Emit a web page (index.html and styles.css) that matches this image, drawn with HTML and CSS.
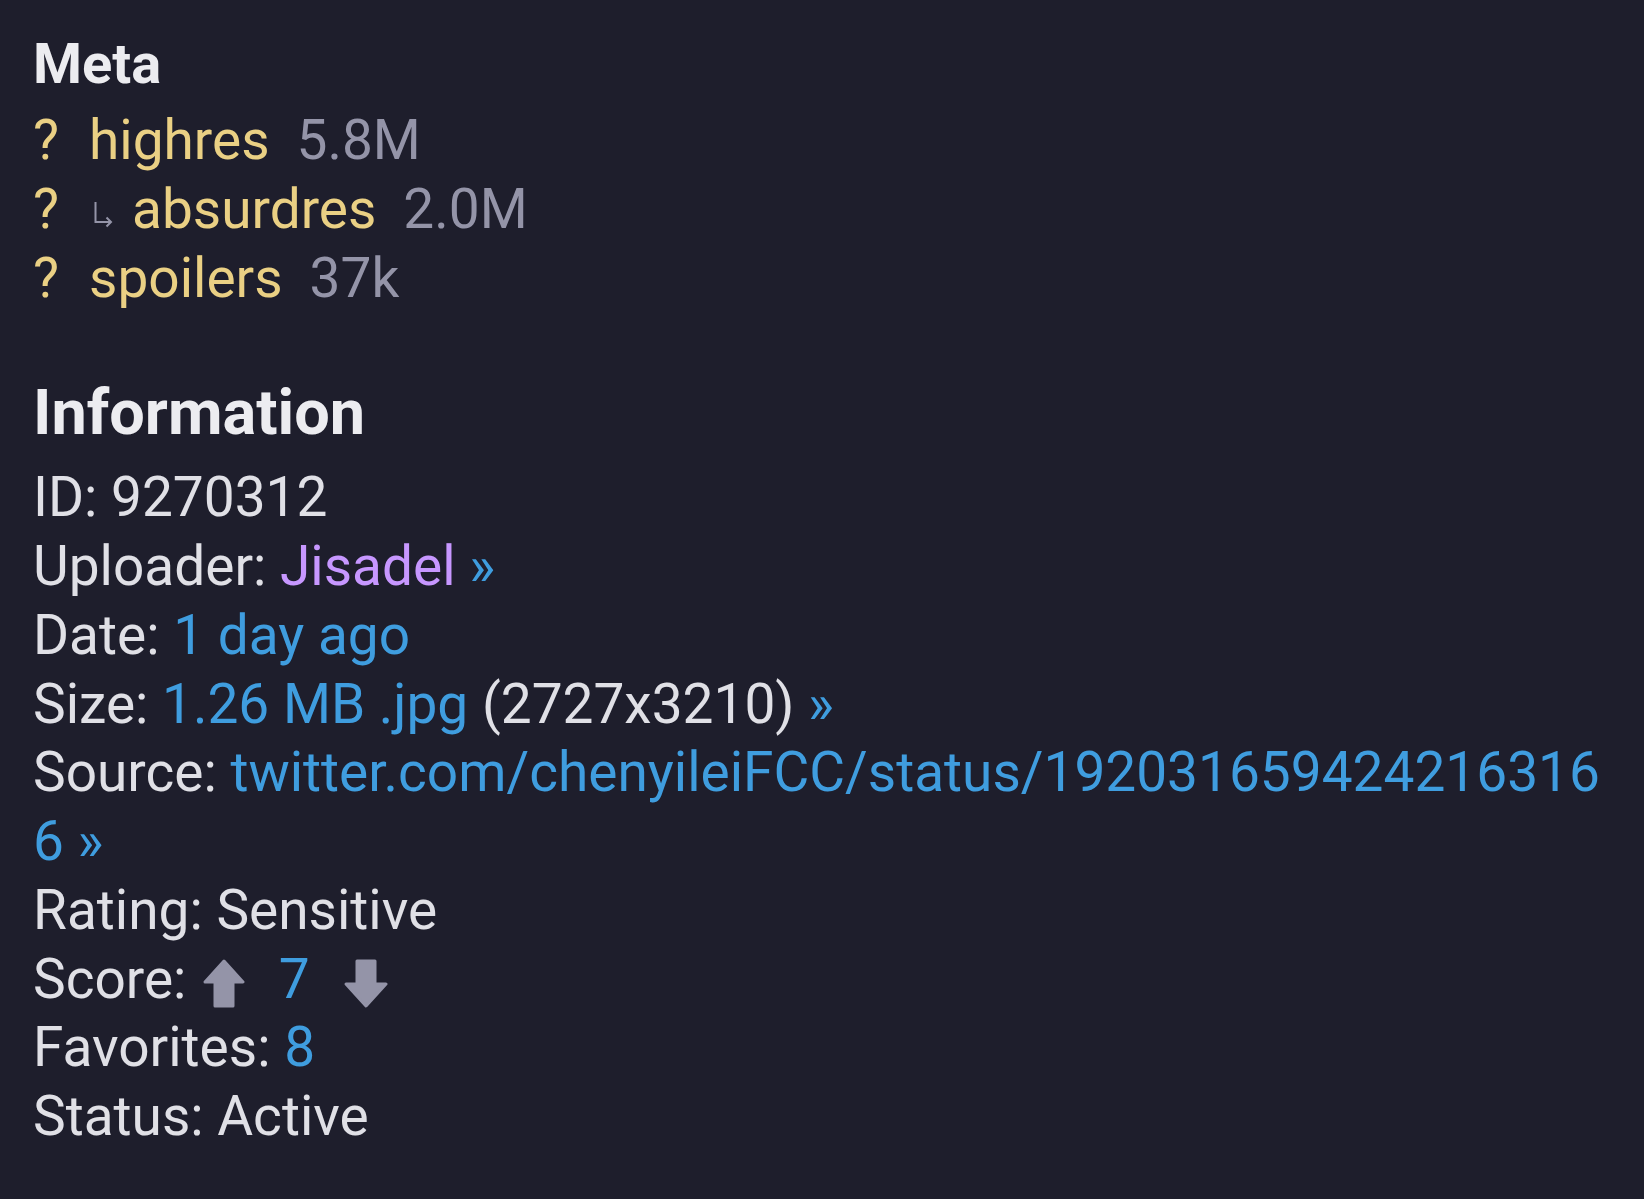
FILE: index.html
```html
<!DOCTYPE html>
<html>

<head>
	<title>Post 9270312</title>
	<meta charset="utf-8">
	<link rel="stylesheet" href="styles.css">
</head>

<body>
	<section class="tag-list">
		<h3>Meta</h3>
		<ul>
			<li><a class="wiki-link" href="#">?</a><a class="search-tag" href="#">highres</a><span class="post-count">5.8M</span></li>
			<li><a class="wiki-link" href="#">?</a><svg class="child-arrow" width="20" height="27" viewBox="0 0 20 27"><path d="M2.5 1 V21 H18 M13.5 16.5 L18 21 L13.5 25.5" fill="none" stroke="#9494a8" stroke-width="2"/></svg><a class="search-tag" href="#">absurdres</a><span class="post-count">2.0M</span></li>
			<li><a class="wiki-link" href="#">?</a><a class="search-tag" href="#">spoilers</a><span class="post-count">37k</span></li>
		</ul>
	</section>
	<section class="post-information">
		<h2>Information</h2>
		<ul>
			<li>ID: 9270312</li>
			<li>Uploader: <a class="user-builder" href="#">Jisadel</a> <a href="#">»</a></li>
			<li>Date: <a href="#">1 day ago</a></li>
			<li>Size: <a href="#">1.26 MB .jpg</a> (2727x3210) <a href="#">»</a></li>
			<li class="source">Source: <a class="source-link" href="#">twitter.com/chenyileiFCC/status/1920316594242163166</a> <a href="#">»</a></li>
			<li>Rating: Sensitive</li>
			<li class="score">Score:
				<a class="vote" href="#"><svg width="42" height="49" viewBox="0 0 42 49"><path d="M21 2 L40 23 H30 V47 H12 V23 H2 Z" fill="#9494a8" stroke="#9494a8" stroke-width="3" stroke-linejoin="round"/></svg></a>
				<a class="score-count" href="#">7</a>
				<a class="vote" href="#"><svg width="44" height="49" viewBox="0 0 44 49"><path d="M22 47 L42 25 H31 V2 H13 V25 H2 Z" fill="#9494a8" stroke="#9494a8" stroke-width="3" stroke-linejoin="round"/></svg></a>
			</li>
			<li>Favorites: <a href="#">8</a></li>
			<li>Status: Active</li>
		</ul>
	</section>
</body>

</html>
```

FILE: styles.css
```css
* {
	margin: 0;
	padding: 0;
}

body {
	background-color: #1e1e2c;
	color: #e0e0e6;
	font-family: Roboto, "Noto Sans", sans-serif;
	font-size: 55px;
	line-height: 1.25;
	padding: 37px 33px 0 33px;
}

a {
	color: #3f9ddf;
	text-decoration: none;
}

ul {
	list-style: none;
}

h3 {
	font-size: 56px;
	line-height: 55px;
	font-weight: 700;
	color: #ececf0;
	margin-bottom: 14px;
}

h2 {
	font-size: 63px;
	line-height: 82px;
	font-weight: 700;
	color: #ececf0;
	margin-bottom: 9px;
}

.tag-list {
	margin-bottom: 60px;
}

.tag-list li {
	display: flex;
	align-items: baseline;
}

.wiki-link {
	color: #ead084;
	margin-right: 30px;
}

.search-tag {
	color: #ead084;
	margin-right: 27px;
}

.post-count {
	color: #9494a8;
}

.child-arrow {
	margin: 0 19px 3px 4px;
}

.user-builder {
	color: #c797ff;
}

.source {
	word-break: break-all;
}

.score .vote svg {
	vertical-align: -10px;
}

.score .vote:first-child {
	margin-left: 3px;
}

.score-count {
	margin: 0 21px 0 20px;
}
```
